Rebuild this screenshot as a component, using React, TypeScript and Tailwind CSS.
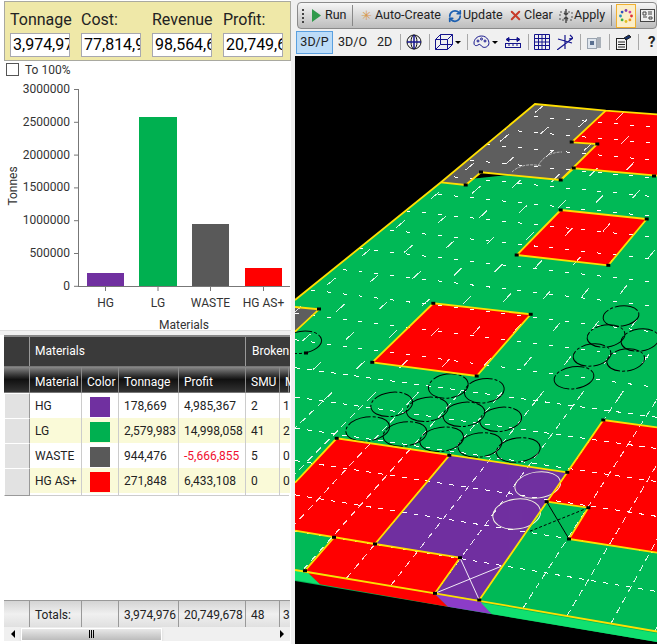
import { Fragment } from 'react';
import { X, RefreshCw } from 'lucide-react';

const font = { fontFamily: 'Roboto, "Noto Sans", sans-serif' };

const stats = [
  { label: 'Tonnage', value: '3,974,976' },
  { label: 'Cost:', value: '77,814,9' },
  { label: 'Revenue', value: '98,564,6' },
  { label: 'Profit:', value: '20,749,6' },
];

const rows = [
  { name: 'HG', color: 'bg-[#7030a0]', tonnage: '178,669', profit: '4,985,367', smu: '2', m: '1' },
  { name: 'LG', color: 'bg-[#00b050]', tonnage: '2,579,983', profit: '14,998,058', smu: '41', m: '2' },
  { name: 'WASTE', color: 'bg-[#595959]', tonnage: '944,476', profit: '-5,666,855', smu: '5', m: '0' },
  { name: 'HG AS+', color: 'bg-[#ff0000]', tonnage: '271,848', profit: '6,433,108', smu: '0', m: '0' },
];

const cols = 'grid grid-cols-[26px_52px_37px_60px_67px_34px_9px]';

function Chart() {
  const bars = [
    { x: 87, y: 272, w: 37, c: '#7030a0', t: 'HG' },
    { x: 139, y: 116, w: 38, c: '#00b050', t: 'LG' },
    { x: 192, y: 223, w: 37, c: '#595959', t: 'WASTE' },
    { x: 245, y: 267, w: 37, c: '#ff0000', t: 'HG AS+' },
  ];
  const ticks = ['3000000', '2500000', '2000000', '1500000', '1000000', '500000', '0'];
  return (
    <svg width="291" height="255" viewBox="0 76 291 255" className="block" style={font}>
      <line x1="78.5" y1="88" x2="78.5" y2="285" stroke="#777" />
      <line x1="78" y1="285.5" x2="290" y2="285.5" stroke="#777" />
      {ticks.map((t, i) => {
        const y = 88 + i * 32.8;
        return (
          <g key={t}>
            <line x1="74" x2="78" y1={y + 0.5} y2={y + 0.5} stroke="#777" />
            <text x="70" y={y + 4} textAnchor="end" fontSize="12" fill="#333">{t}</text>
          </g>
        );
      })}
      {bars.map((b) => (
        <g key={b.t}>
          <rect x={b.x} y={b.y} width={b.w} height={285 - b.y} fill={b.c} />
          <line x1={b.x + b.w / 2} x2={b.x + b.w / 2} y1="286" y2="290" stroke="#777" />
          <text x={b.x + b.w / 2} y="306" textAnchor="middle" fontSize="12" fill="#333">{b.t}</text>
        </g>
      ))}
      <text x="184" y="328" textAnchor="middle" fontSize="12" fill="#333">Materials</text>
      <text transform="translate(17 185) rotate(-90)" textAnchor="middle" fontSize="12" fill="#333">Tonnes</text>
    </svg>
  );
}

function LeftPanel() {
  return (
    <div className="w-[291px] h-[644px] flex flex-col shrink-0 bg-white">
      <div className="ml-[4px] mt-[1px] w-[287px] h-[60px] bg-[#efe8a8] border border-[#a9a9a0] px-[5px] pt-[5px]">
        <div className="flex gap-[11px]">
          {stats.map((s) => (
            <div key={s.label} className="w-[60px]">
              <div className="h-[26px] text-[16px] leading-[26px] text-[#222] whitespace-nowrap">{s.label}</div>
              <div className="h-[24px] bg-white border border-[#a8a8b0] pl-[2px] text-[16px] leading-[22px] text-black overflow-hidden whitespace-nowrap">
                {s.value}
              </div>
            </div>
          ))}
        </div>
      </div>
      <div className="h-[15px] flex items-center pl-[6px] mt-[1px]">
        <div className="w-[13px] h-[13px] bg-white border border-[#555]" />
        <span className="ml-[6px] text-[12px] text-[#333]">To 100%</span>
      </div>
      <Chart />
      <div className="h-[5px] bg-[#f0f0f0] border-t border-[#ddd] -mt-[2px]" />
      <div className="ml-[4px] w-[286px] flex-1 border-t-2 border-[#888] flex flex-col overflow-hidden min-h-0">
        <div className={`${cols} h-[29px] bg-[#3a3a3a] text-white text-[12px] leading-[29px]`}>
          <div className="border-r border-[#999]" />
          <div className="col-span-4 pl-[5px] border-r border-[#999]">Materials</div>
          <div className="col-span-2 pl-[6px] whitespace-nowrap">Broken</div>
        </div>
        <div className={`${cols} h-[27px] border-y border-[#777] bg-linear-to-b from-[#8a8a8a] via-[#111] to-[#333] text-white text-[12px] leading-[30px]`}>
          {['', 'Material', 'Color', 'Tonnage', 'Profit', 'SMU', 'M'].map((h) => (
            <div key={h} className="pl-[5px] border-r border-[#8a8a8a] whitespace-nowrap">{h}</div>
          ))}
        </div>
        {rows.map((r, i) => (
          <div key={r.name} className={`${cols} h-[25px] text-[12px] leading-[27px] text-[#222] ${i % 2 ? 'bg-[#fafad8]' : 'bg-white'}`}>
            <div className="bg-[#e2e2e2] border border-white border-r-[#999] border-b-[#999]" />
            <div className="pl-[5px] border-r border-b border-[#ccc] whitespace-nowrap">{r.name}</div>
            <div className="border-r border-b border-[#ccc] flex items-center justify-center">
              <div className={`w-[20px] h-[20px] ${r.color}`} />
            </div>
            <div className="pl-[5px] border-r border-b border-[#ccc] whitespace-nowrap">{r.tonnage}</div>
            <div className={`pl-[5px] border-r border-b border-[#ccc] whitespace-nowrap ${r.profit.startsWith('-') ? 'text-[#f01030]' : ''}`}>{r.profit}</div>
            <div className="pl-[5px] border-r border-b border-[#ccc]">{r.smu}</div>
            <div className="pl-[3px] border-b border-[#ccc]">{r.m}</div>
          </div>
        ))}
        <div className="flex-1" />
        <div className={`${cols} h-[27px] bg-linear-to-b from-[#d4d4d4] via-[#f0f0f0] to-[#e0e0e0] border-t border-[#999] text-[12px] leading-[28px] text-[#222]`}>
          <div className="border-r border-[#999]" />
          <div className="pl-[5px] border-r border-[#999]">Totals:</div>
          <div className="border-r border-[#999]" />
          <div className="pl-[5px] border-r border-[#999] whitespace-nowrap">3,974,976</div>
          <div className="pl-[5px] border-r border-[#999] whitespace-nowrap">20,749,678</div>
          <div className="pl-[5px] border-r border-[#999]">48</div>
          <div className="pl-[3px]">3</div>
        </div>
        <div className="h-[14px] bg-[#f0f0f0] flex items-center">
          <div className="w-[17px] flex justify-center">
            <div className="border-y-[4px] border-y-transparent border-r-[4px] border-r-black" />
          </div>
          <div className="w-[141px] h-[13px] border border-white bg-linear-to-b from-[#e8e8e8] to-[#bcbcbc] flex justify-center items-center gap-[1px] shadow-sm">
            <div className="w-px h-[8px] bg-black" />
            <div className="w-px h-[8px] bg-black" />
            <div className="w-px h-[8px] bg-black" />
          </div>
          <div className="flex-1" />
          <div className="w-[17px] flex justify-center">
            <div className="border-y-[4px] border-y-transparent border-l-[4px] border-l-black" />
          </div>
        </div>
      </div>
      <div className="h-[3px] bg-white" />
    </div>
  );
}

function Sep({ dark }: { dark?: boolean }) {
  return <div className={`w-px ${dark ? 'h-[21px] bg-[#888]' : 'h-[16px] bg-[#a8a8a8]'} shrink-0`} />;
}

function Caret() {
  return <div className="border-x-[3px] border-x-transparent border-t-[3px] border-t-black ml-[1px] shrink-0" />;
}

const navy = '#14148c';

function Toolbars() {
  return (
    <div className="h-[56px] bg-[#f0f0f0] shrink-0">
      <div className="h-[2px]" />
      <div className="h-[27px] rounded-[4px] border border-[#8a8a8a] bg-linear-to-b from-[#f6f6f6] via-[#d8d8d8] to-[#bdbdbd] flex items-center text-[12.5px] text-[#222] whitespace-nowrap ml-[2px] pl-[4px]">
        <div className="w-[2px] h-[14px] border-l-2 border-dotted border-[#444] shrink-0" />
        <svg width="9" height="13" viewBox="0 0 9 13" className="ml-[8px] shrink-0"><path d="M0 0l9 6.5L0 13z" fill="#2f9a4a" /></svg>
        <span className="ml-[4px] w-[20px]">Run</span>
        <div className="ml-[7px]"><Sep dark /></div>
        <span className="ml-[8px] text-[#d89a50] text-[13px] leading-none w-[10px]">✳</span>
        <span className="ml-[4px] w-[64px]">Auto-Create</span>
        <RefreshCw size={14} strokeWidth={3} color="#1c5fb0" className="ml-[9px] shrink-0" />
        <span className="ml-[1px] w-[38px]">Update</span>
        <X size={15} strokeWidth={3.2} color="#c83a2a" className="ml-[7px] shrink-0" />
        <span className="ml-[1px] w-[27px]">Clear</span>
        <svg width="14" height="14" viewBox="0 0 14 14" className="ml-[8px] shrink-0">
          <rect x="1" y="3" width="12" height="8" fill="none" stroke="#555" strokeDasharray="2 2" />
          <path d="M7 0v6M5 4l2 2 2-2M7 14V8M5 10l2-2 2 2" stroke="#444" fill="none" strokeWidth="1.4" />
        </svg>
        <span className="ml-[1px] w-[31px]">Apply</span>
        <div className="ml-[6px]"><Sep dark /></div>
        <div className="ml-[4px] w-[20px] h-[24px] bg-[#fbeec8] border border-[#f0b030] flex items-center justify-center shrink-0">
          <svg width="14" height="14" viewBox="0 0 14 14">
            {['#e03030', '#f09020', '#e0c020', '#40b040', '#2090c0', '#3050c0', '#8040b0', '#d040a0'].map((c, i) => (
              <circle key={c} cx={7 + 5.5 * Math.cos((i * Math.PI) / 4)} cy={7 + 5.5 * Math.sin((i * Math.PI) / 4)} r="1.4" fill={c} />
            ))}
          </svg>
        </div>
        <svg width="15" height="13" viewBox="0 0 15 13" className="ml-[4px] shrink-0">
          <rect x="0.5" y="0.5" width="14" height="12" fill="#eee" stroke="#444" />
          <path d="M3 3h3v3H3zM8 3h4M8 5h4M3 8h4M9 8h3v2H9z" stroke="#444" fill="none" />
        </svg>
      </div>
      <div className="h-[26px] flex items-center text-[12.5px] text-[#222] whitespace-nowrap">
        <div className="w-[37px] h-[23px] bg-[#bcdcf8] border border-[#5aa0e0] flex items-center justify-center shrink-0 ml-[1px] mt-[1px]">3D/P</div>
        <span className="ml-[5px] w-[28px]">3D/O</span>
        <span className="ml-[11px] w-[14px]">2D</span>
        <div className="ml-[9px]"><Sep /></div>
        <svg width="16" height="16" viewBox="0 0 16 16" className="ml-[5px] shrink-0" fill="none" stroke="#111">
          <circle cx="8" cy="8" r="7" />
          <ellipse cx="8" cy="8" rx="3" ry="7" />
          <path d="M1 8h14M8 1v14" stroke={navy} strokeWidth="1.5" />
        </svg>
        <div className="ml-[7px]"><Sep /></div>
        <svg width="18" height="16" viewBox="0 0 18 16" className="ml-[5px] shrink-0" fill="none" stroke={navy}>
          <path d="M.5 5.5h12v10H.5zM.5 5.5l5-5h12v10l-5 5M12.5 5.5l5-5M5.5.5v10h12M5.5 10.5l-5 5" />
        </svg>
        <div className="ml-[1px]"><Caret /></div>
        <div className="ml-[6px]"><Sep /></div>
        <svg width="17" height="15" viewBox="0 0 17 15" className="ml-[5px] shrink-0" fill="none" stroke={navy}>
          <path d="M8.5 1C4 1 1 4.5 1 8c0 3 2.5 3 4 2s2-1 3.500 1 5 2 7-1c1.500-3-1-9-7-9z" />
          <circle cx="5" cy="6" r="1" />
          <circle cx="8.500" cy="4" r="1" />
          <circle cx="12" cy="6" r="1" />
        </svg>
        <div className="ml-[1px]"><Caret /></div>
        <svg width="16" height="11" viewBox="0 0 16 11" className="ml-[7px] shrink-0" fill="none" stroke={navy}>
          <path d="M3 2.500h10M1 2.500l3-2v4zM15 2.500l-3-2v4z" fill={navy} />
          <rect x="0.500" y="6.500" width="15" height="4" />
          <path d="M4 7v2M8 7v2M12 7v2" />
        </svg>
        <div className="ml-[7px]"><Sep /></div>
        <svg width="16" height="16" viewBox="0 0 16 16" className="ml-[5px] shrink-0" fill="none" stroke={navy}>
          <path d="M.5.5h15v15H.5zM.5 4.500h15M.5 8h15M.5 11.500h15M4.500.5v15M8 .5v15M11.500.5v15" />
        </svg>
        <svg width="16" height="16" viewBox="0 0 16 16" className="ml-[7px] shrink-0" fill="none" stroke={navy} strokeWidth="1.2">
          <path d="M0 16l16-12M8 1v14M1 5l14 4M13 1l3 3-4 1" />
        </svg>
        <div className="ml-[7px]"><Sep /></div>
        <svg width="14" height="13" viewBox="0 0 14 13" className="ml-[6px] shrink-0">
          <rect x="0.500" y="2.500" width="9" height="10" fill="#dfe6ee" stroke="#9aa4b0" />
          <rect x="3" y="5" width="4" height="4" fill="#5a7090" />
          <path d="M11 1v11M13 1v11" stroke="#8a94a0" strokeWidth="1.400" />
        </svg>
        <div className="ml-[8px]"><Sep /></div>
        <svg width="16" height="16" viewBox="0 0 16 16" className="ml-[5px] shrink-0" fill="none" stroke="#222">
          <rect x="1.500" y="4.500" width="10" height="11" fill="#f4f4f4" />
          <path d="M3 8h7M3 10.500h7M3 13h7" />
          <path d="M9 4l5-3 2 2-5 3z" fill="#14306c" />
        </svg>
        <div className="ml-[7px]"><Sep /></div>
        <span className="ml-[9px] text-[15px] font-bold leading-none w-[10px] text-[#222]">?</span>
        <div className="ml-[4px]"><Caret /></div>
      </div>
    </div>
  );
}

const VP1 = [1191, -432];
const VP2 = [-5160, -380];

// base points along the front edge of the block, one per column
const baseLines = Array.from({ length: 20 }, (_, k) => {
  const x = 346.7 + 44 * (k - 8);
  return [x, 570.7 + 0.174 * (x - 305)];
});

// row lines, given by where they cross x=295
const rowYs: number[] = [];
for (let y = 569, s = 38, i = 0; i < 21; i++) {
  y -= s;
  s *= 0.95;
  rowYs.push(y);
}

function at(p: number[], q: number[], x: number) {
  return p[1] + ((q[1] - p[1]) * (x - p[0])) / (q[0] - p[0]);
}

type Poly = { pts: string; fill: string };

const polys: Poly[] = [
  { pts: '441,182 573.7,168 657,176 657,642 295,581 295,300', fill: '#00b956' },
  { pts: '535,104 605.7,110.7 571.7,142.3 597.300,144 573.700,168.300 560.700,180 481,172.300 465.700,185 441,182.300', fill: '#5f5f5f' },
  { pts: '605.700,110.700 657,114.300 657,175.700 573.700,168.300 597.300,144 571.700,142.300', fill: '#ff0000' },
  { pts: '295,307 319,309.300 295,331.700', fill: '#5f5f5f' },
  { pts: '560.700,210 646.700,219 608.300,265.300 516.700,255', fill: '#ff0000' },
  { pts: '433.300,303.300 530.700,314.300 476.700,376 372.300,362.300', fill: '#ff0000' },
  { pts: '603.300,420 657,427.300 657,552.700 569,539 588.300,507.700 546.700,501.700 567.300,472.300', fill: '#ff0000' },
  { pts: '336.700,438.300 449.300,455.300 375,544 334,537.300 295,530.700 295,482.700', fill: '#ff0000' },
  { pts: '334,537.300 375,544 460,557.700 435,593.300 305,570.700', fill: '#ff0000' },
  { pts: '449.300,455.300 567.300,472.300 546.700,501.700 479.300,600 435,593.300 460,557.700 375,544', fill: '#7030a0' },
  { pts: '295,570 307,571.700 320,584.300 295,580', fill: '#10e070' },
  { pts: '307,571.700 435,594 448,606.700 320,584.300', fill: '#ff0000' },
  { pts: '435,594 479.300,600 491.700,614 448,606.700', fill: '#8c3cc8' },
  { pts: '481,602.700 657,633.300 657,642 491.700,614', fill: '#10e070' },
];

const edges = [
  '295,300 441,182.300 535,104 605.700,110.700 657,114.300',
  '441,182.300 465.700,185 481,172.300 560.700,180 573.700,168.300 657,175.700',
  '605.700,110.700 571.700,142.300 597.300,144 560.700,180',
  '295,307 319,309.300 295,331.700',
  '560.700,210 646.700,219 608.300,265.300 516.700,255 560.700,210',
  '372.300,362.300 433.300,303.300 530.700,314.300 476.700,376 372.300,362.300',
  '657,427.300 603.300,420 479.300,600',
  '546.700,501.700 588.300,507.700 569,539 657,552.700',
  '295,482.700 336.700,438.300 567.300,472.300',
  '449.300,455.300 375,544 460,557.700 435,593.300',
  '295,530.700 375,544',
  '334,537.300 305,570.700',
  '295,570 435,593.300 657,631.500',
];

const nodes = [
  [319, 309], [465.700, 185], [481, 172], [560.700, 180], [571.700, 142], [597.300, 144], [573.700, 168], [654, 176],
  [560.700, 210], [646.700, 219], [608.300, 265.300], [516.700, 255], [433.300, 303.300], [530.700, 314.300],
  [476.700, 376], [372.300, 362.300], [306, 353], [603.300, 420], [567.300, 472.300], [546.700, 501.700], [588.300, 507.700],
  [569, 539], [336.700, 438.300], [449.300, 455.300], [375, 544], [334, 537.300], [460, 557.700], [435, 593.300], [479.300, 600], [305, 570.700],
];

const blackRings = [
  [621, 316, 18, 10], [606, 336, 19, 11], [640, 340, 19, 11], [592, 355, 19, 11], [625.700, 360, 19, 11], [574, 377.700, 20, 11],
  [448.300, 386, 20, 12], [484.300, 390.700, 20, 12], [391.700, 404.300, 21, 12], [427.300, 409.300, 21, 12], [464, 414.300, 21, 12],
  [500.700, 419.300, 21, 12], [367.700, 429, 22, 12], [405, 434, 22, 12], [441.700, 439.300, 22, 12], [480, 445, 22, 12], [518.300, 450, 22, 12],
  [301.700, 342.300, 20, 11],
];

const whiteRings = [
  [537.700, 485, 23, 13], [516.700, 514, 24, 15],
];

function Scene() {
  return (
    <svg viewBox="295 56 362 588" width="362" height="588" className="block bg-black">
      <defs>
        <clipPath id="plane">
          <polygon points="295,300 441,182.300 535,104 657,114.300 657,631.500 295,570" />
        </clipPath>
      </defs>
      {polys.map((p) => <polygon key={p.pts} points={p.pts} fill={p.fill} />)}
      <g clipPath="url(#plane)" stroke="#fff" strokeWidth="1" shapeRendering="crispEdges">
        {rowYs.map((y) => {
          const p = [295, y];
          return <line key={y} x1="295" y1={y} x2="657" y2={at(p, VP2, 657)} strokeDasharray={y > 340 ? '5 7' : '4 12'} />;
        })}
        {baseLines.map((b) => {
          // dense dashes in the front, sparse towards the back
          const xm = b[0] + ((VP1[0] - b[0]) * (b[1] - 400)) / (b[1] - VP1[1]);
          return (
            <Fragment key={b[0]}>
              <line x1={b[0]} y1={b[1]} x2={xm} y2="400" strokeDasharray="7 5" opacity="0.85" />
              <line x1={xm} y1="400" x2={VP1[0]} y2={VP1[1]} strokeDasharray="11 34" opacity="0.85" />
            </Fragment>
          );
        })}
      </g>
      <g fill="none" stroke="#fff" strokeWidth="1">
        <path d="M460 557.700L479.300 600M435 593.300L502 566" opacity="0.9" />
      </g>
      <path d="M546.700 501.700L569 539" stroke="#000" strokeWidth="1" />
      <path d="M588.300 507.700L528 532" stroke="#000" strokeDasharray="3 2" />
      {blackRings.map(([cx, cy, rx, ry]) => (
        <ellipse key={`${cx}-${cy}`} cx={cx} cy={cy} rx={rx} ry={ry} transform={`rotate(-8 ${cx} ${cy})`} fill="none" stroke="#000" strokeDasharray="24 2 3 2" />
      ))}
      {whiteRings.map(([cx, cy, rx, ry]) => (
        <ellipse key={cx} cx={cx} cy={cy} rx={rx} ry={ry} transform={`rotate(-8 ${cx} ${cy})`} fill="none" stroke="#f0f0e0" strokeWidth="1" />
      ))}
      <g fill="none" stroke="#e8e8e8" strokeWidth="0.8" opacity="0.8">
        <path d="M512 172c6-6 16-9 30-6M538 166c4-8 12-14 24-14" strokeDasharray="3 1" />
      </g>
      {edges.map((e) => (
        <polyline key={e} points={e} fill="none" stroke="#ffdf00" strokeWidth="1.800" />
      ))}
      {nodes.map(([x, y]) => (
        <rect key={`${x}-${y}`} x={x - 2} y={y - 1.500} width="4" height="3" fill="#000" />
      ))}
    </svg>
  );
}

export default function App() {
  return (
    <div className="w-[657px] h-[644px] overflow-hidden flex bg-white" style={font}>
      <LeftPanel />
      <div className="w-[4px] bg-[#f0f0f0] shrink-0" />
      <div className="flex-1 flex flex-col min-w-0">
        <Toolbars />
        <Scene />
      </div>
    </div>
  );
}
